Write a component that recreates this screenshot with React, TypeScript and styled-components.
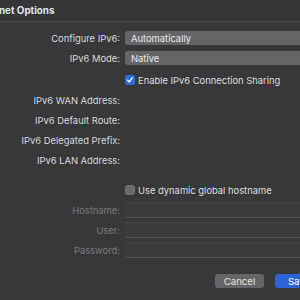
import styled, { createGlobalStyle } from "styled-components";

const GlobalStyle = createGlobalStyle`
  html, body {
    margin: 0;
    padding: 0;
    background: #38383a;
    overflow: hidden;
  }
  body {
    font-family: Inter, "Liberation Sans", sans-serif;
    -webkit-font-smoothing: antialiased;
  }
`;

const Sheet = styled.div`
  width: 330px;
  height: 300px;
  display: flex;
  flex-direction: column;
  background: #38383a;
  color: #dcdcdc;
  font-size: 9.4px;
`;

const Header = styled.div`
  height: 21px;
  border-bottom: 1px solid #4b4b4d;
  display: flex;
  align-items: center;
  background: #363638;
`;

const Title = styled.h1`
  margin: 0 0 0 -1px;
  font-size: 9.8px;
  font-weight: 700;
  color: #e2e2e2;
  white-space: nowrap;
`;

const Form = styled.div`
  display: flex;
  flex-direction: column;
  padding: 6px 10px 0 0;
`;

const Row = styled.div<{ $gap?: number; $h?: number }>`
  display: grid;
  grid-template-columns: 120px 1fr;
  column-gap: 5px;
  align-items: center;
  height: ${(p) => p.$h ?? 20}px;
  margin-top: ${(p) => p.$gap ?? 0}px;
`;

const Label = styled.span<{ $disabled?: boolean }>`
  text-align: right;
  white-space: nowrap;
  color: ${(p) => (p.$disabled ? "#78787a" : "#d9d9d9")};
`;

const Popup = styled.div`
  height: 14px;
  border-radius: 3px;
  background: #656567;
  color: #e8e8e8;
  display: flex;
  align-items: center;
  padding-left: 6px;
`;

const CheckWrap = styled.label`
  display: flex;
  align-items: center;
  gap: 3px;
  white-space: nowrap;
  color: #dedede;
`;

const Box = styled.span<{ $on?: boolean }>`
  width: 10px;
  height: 10px;
  border-radius: 2.5px;
  box-sizing: border-box;
  display: inline-flex;
  align-items: center;
  justify-content: center;
  background: ${(p) => (p.$on ? "#2f6ee0" : "#69696b")};
  border: ${(p) => (p.$on ? "none" : "1px solid #737375")};
`;

const Field = styled.div`
  height: 16px;
  box-sizing: border-box;
  background: #3c3c3e;
  border-top: 1px solid #444446;
  border-bottom: 1px solid #525254;
`;

const Buttons = styled.div`
  display: flex;
  justify-content: flex-end;
  gap: 11px;
  margin-top: 14px;
  margin-right: -3px;
`;

const Button = styled.div<{ $primary?: boolean }>`
  height: 14px;
  width: ${(p) => (p.$primary ? 48 : 49)}px;
  border-radius: 3px;
  display: flex;
  align-items: center;
  justify-content: center;
  font-size: 9.6px;
  color: ${(p) => (p.$primary ? "#ffffff" : "#e4e4e4")};
  background: ${(p) => (p.$primary ? "#2c64d8" : "#656567")};
`;

const Check = () => (
  <svg width="8" height="8" viewBox="0 0 8 8">
    <path
      d="M1.6 4.2 L3.2 5.8 L6.4 1.8"
      fill="none"
      stroke="#fff"
      strokeWidth="1.3"
      strokeLinecap="round"
      strokeLinejoin="round"
    />
  </svg>
);

export default function App() {
  const info = [
    "IPv6 WAN Address:",
    "IPv6 Default Route:",
    "IPv6 Delegated Prefix:",
    "IPv6 LAN Address:",
  ];
  const fields = ["Hostname:", "User:", "Password:"];

  return (
    <>
      <GlobalStyle />
      <Sheet>
        <Header>
          <Title>net Options</Title>
        </Header>
        <Form>
          <Row>
            <Label>Configure IPv6:</Label>
            <Popup>Automatically</Popup>
          </Row>
          <Row>
            <Label>IPv6 Mode:</Label>
            <Popup>Native</Popup>
          </Row>
          <Row $gap={2}>
            <span />
            <CheckWrap>
              <Box $on>
                <Check />
              </Box>
              Enable IPv6 Connection Sharing
            </CheckWrap>
          </Row>
          {info.map((l) => (
            <Row key={l}>
              <Label>{l}</Label>
              <span />
            </Row>
          ))}
          <Row $gap={10}>
            <span />
            <CheckWrap>
              <Box />
              Use dynamic global hostname
            </CheckWrap>
          </Row>
          {fields.map((l) => (
            <Row key={l}>
              <Label $disabled>{l}</Label>
              <Field />
            </Row>
          ))}
          <Buttons>
            <Button>Cancel</Button>
            <Button $primary>Save</Button>
          </Buttons>
        </Form>
      </Sheet>
    </>
  );
}
